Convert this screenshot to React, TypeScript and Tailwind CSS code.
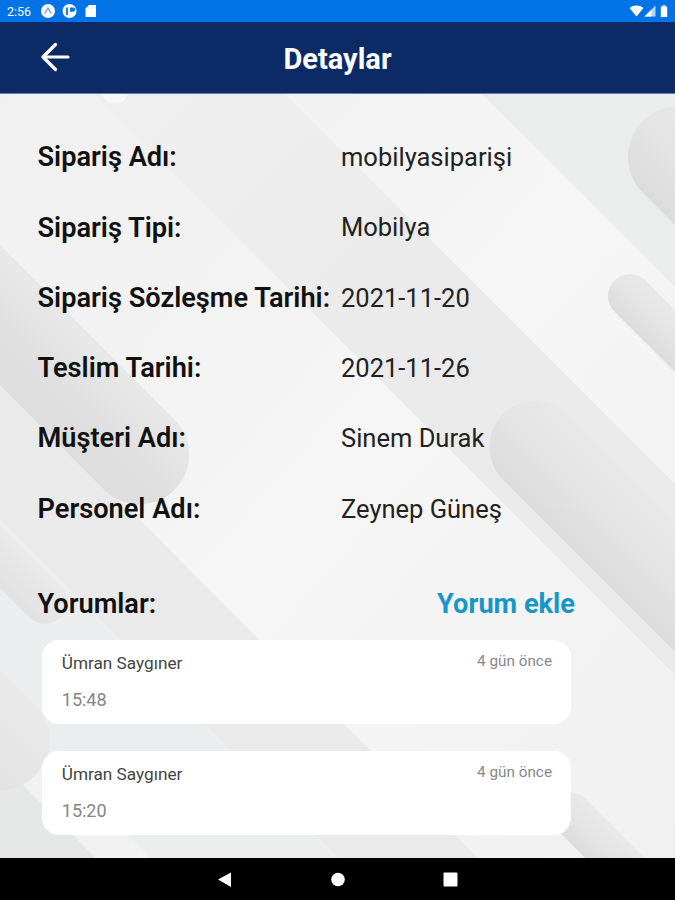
const details = [
  { label: 'Sipariş Adı:', value: 'mobilyasiparişi' },
  { label: 'Sipariş Tipi:', value: 'Mobilya' },
  { label: 'Sipariş Sözleşme Tarihi:', value: '2021-11-20' },
  { label: 'Teslim Tarihi:', value: '2021-11-26' },
  { label: 'Müşteri Adı:', value: 'Sinem Durak' },
  { label: 'Personel Adı:', value: 'Zeynep Güneş' },
];

const comments = [
  { author: 'Ümran Saygıner', text: '15:48', date: '4 gün önce' },
  { author: 'Ümran Saygıner', text: '15:20', date: '4 gün önce' },
];

function StatusBar() {
  return (
    <div className="flex h-[22px] shrink-0 items-center bg-[#0073e6] pl-[7px] pr-[6px] text-white">
      <span className="w-[33px] pt-[2px] text-[12.5px] leading-none">2:56</span>
      <svg className="h-[14px] w-[58px]" viewBox="0 0 58 14" fill="none">
        <circle cx="8" cy="7" r="7" fill="#fff" />
        <path d="M4.700 9.500 8 4.200l3.300 5.300" stroke="#5a9de8" strokeWidth="1.300" />
        <circle cx="29.500" cy="7" r="7" fill="#fff" />
        <path d="M27 3.500v7.500" stroke="#0073e6" strokeWidth="1.800" />
        <path d="M30 3.500h3.200a2 2 0 0 1 0 4.200H30z" fill="#0073e6" />
        <path d="M49 1h7v12H45.500V4.500z" fill="#fff" />
        <path d="M49 3v2M51.500 3v2M54 3v2" stroke="#c4def9" strokeWidth=".8" />
      </svg>
      <svg className="ml-auto h-[14px] w-[40px]" viewBox="0 0 40 14" fill="#fff">
        <path d="M0.500 4C4.500.700 10.500.700 14.500 4L7.500 12.500z" />
        <path d="M26.500 1.500v11h-11z" fill="#b5d5f8" />
        <path d="M22.500 5.500v7h-7z" />
        <path d="M33.500 1.200h3v1.300h1.700v10.500h-6.400V2.500h1.700z" />
      </svg>
    </div>
  );
}

function Header() {
  return (
    <header className="grid h-[72px] shrink-0 grid-cols-[1fr_auto_1fr] items-center border-b border-[#6f7da6] bg-[#0b2a66] text-white">
      <svg className="mb-[2px] ml-[41px] h-[30px] w-[30px]" viewBox="0 0 30 30" fill="none" stroke="#fff" strokeWidth="3.200" strokeLinecap="round" strokeLinejoin="round">
        <path d="M14.500 2.500 2 15l12.500 12.500M2.500 15H27" />
      </svg>
      <h1 className="pt-[4px] text-[29px] leading-none font-bold">Detaylar</h1>
      <span />
    </header>
  );
}

function Backdrop() {
  return (
    <svg className="absolute inset-0 h-full w-full" viewBox="0 94 675 764" preserveAspectRatio="none">
      <defs>
        <linearGradient id="base" x1="0" y1="0" x2="1" y2="1">
          <stop offset="0" stopColor="#f0f0f0" />
          <stop offset=".25" stopColor="#f2f2f2" />
          <stop offset=".5" stopColor="#f6f6f6" />
          <stop offset="1" stopColor="#f0f0f0" />
        </linearGradient>
        <linearGradient id="cap" x1="0" y1="0" x2="0" y2="1">
          <stop offset="0" stopColor="#e9e9e9" />
          <stop offset=".5" stopColor="#e4e4e4" />
          <stop offset="1" stopColor="#dcdcdc" />
        </linearGradient>
        <linearGradient id="leftPill" gradientUnits="userSpaceOnUse" x1="45" y1="290" x2="-5" y2="340">
          <stop offset="0" stopColor="#e8e8e8" />
          <stop offset=".6" stopColor="#e2e2e2" />
          <stop offset="1" stopColor="#dedede" />
        </linearGradient>
        <linearGradient id="band" gradientUnits="userSpaceOnUse" x1="150" y1="100" x2="400" y2="350">
          <stop offset="0" stopColor="#efefef" />
          <stop offset="1" stopColor="#eaeaea" />
        </linearGradient>
        <linearGradient id="soft" x1="0" y1="0" x2="0" y2="1">
          <stop offset="0" stopColor="#eaeaea" />
          <stop offset="1" stopColor="#e1e1e1" />
        </linearGradient>
      </defs>
      <rect y="94" width="675" height="764" fill="url(#base)" />
      <path d="M94 94h191l390 390v191z" fill="url(#band)" />
      <path d="M482 94H675V287z" fill="#ebecec" />
      <path d="M0 380 478 858H338L0 520z" fill="#eaeaea" />
      <path d="M0 520 338 858H0z" fill="#ecedee" />
      <circle cx="115" cy="91" r="13" fill="#f7f7f7" />

      {/* rounded bars, each turned 45 degrees around the centre of its cap */}
      <rect x="628" y="106" width="400" height="102" rx="51" fill="url(#cap)" transform="rotate(45 679 157)" />
      <rect x="608" y="274" width="300" height="44" rx="22" fill="url(#cap)" transform="rotate(45 630 296)" />
      <rect x="489.500" y="400.500" width="400" height="93" rx="46.500" fill="url(#cap)" transform="rotate(45 536 447)" />
      <path d="M0 245 174.500 419.500A49.500 49.500 0 0 1 104.500 490L0 385z" fill="url(#leftPill)" />
      <rect x="-233" y="580" width="300" height="44" rx="22" fill="url(#soft)" transform="rotate(45 45 602)" />
      <path d="M0 758 100 858H0z" fill="#e6e7e7" />
      <path d="M23 785 50 758l100 100H96z" fill="#f1f1f1" />
      <rect x="-250" y="690" width="300" height="100" rx="50" fill="url(#soft)" transform="rotate(45 0 740)" />
      <rect x="550" y="793" width="300" height="42" rx="21" fill="url(#cap)" transform="rotate(45 571 814)" />
    </svg>
  );
}

function NavBar() {
  return (
    <nav className="flex h-[42px] shrink-0 items-center bg-black">
      <svg className="h-full w-full" viewBox="0 0 675 42" fill="#fff">
        <path d="M218 21.500 231 14.500v14.500z" />
        <circle cx="338" cy="21.500" r="6.800" />
        <rect x="443.500" y="14.500" width="14" height="14" rx="1" />
      </svg>
    </nav>
  );
}

export default function App() {
  return (
    <div className="flex h-[900px] w-[675px] flex-col overflow-hidden font-[Roboto,sans-serif]">
      <StatusBar />
      <Header />
      <main className="relative flex-1 overflow-hidden">
        <Backdrop />
        <div className="relative pt-[28px]">
          <dl className="pl-[37.5px]">
            {details.map(({ label, value }) => (
              <div key={label} className="grid h-[70.3px] grid-cols-[303.5px_1fr] items-center whitespace-nowrap">
                <dt className="pt-px text-[27.2px] font-semibold text-[#111]">{label}</dt>
                <dd className="text-[25.5px] font-normal text-[#222]">{value}</dd>
              </div>
            ))}
          </dl>
          <div className="mt-[33px] flex h-[54px] items-center justify-between pt-px pr-[100px] pl-[37.5px] text-[27.2px]">
            <h2 className="font-semibold text-[#111]">Yorumlar:</h2>
            <button className="font-bold text-[#1796c9]">Yorum ekle</button>
          </div>
          <ul className="mt-[9.4px] flex flex-col gap-[27px] pl-[42.4px]">
            {comments.map((c) => (
              <li key={c.text} className="flex h-[84px] w-[529px] justify-between rounded-[17px] bg-white px-[19.4px]">
                <div className="pt-[13.5px]">
                  <p className="text-[17.2px] leading-[18px] text-[#444]">{c.author}</p>
                  <p className="mt-[18px] text-[18px] leading-[20px] text-[#858585]">{c.text}</p>
                </div>
                <time className="pt-[12px] text-[15.3px] leading-[18px] text-[#888]">{c.date}</time>
              </li>
            ))}
          </ul>
        </div>
      </main>
      <NavBar />
    </div>
  );
}
